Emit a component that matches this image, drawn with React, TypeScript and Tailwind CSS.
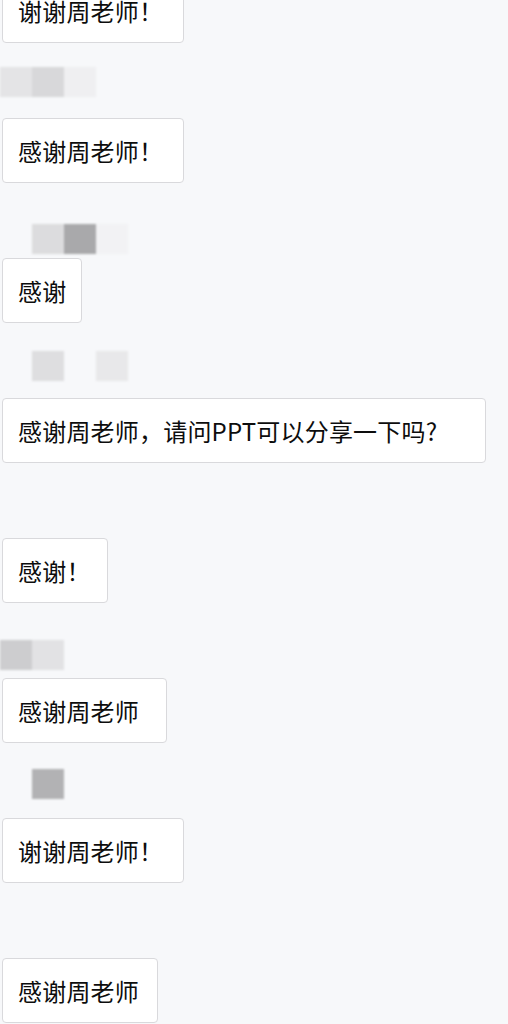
import React from 'react';

type Block = { left: string; w: string; color: string };

interface Msg {
  text: string;
  width: string;
  gapTop: string;
  blocks: Block[];
}

const messages: Msg[] = [
  { text: '谢谢周老师！', width: 'w-[182px]', gapTop: '', blocks: [] },
  {
    text: '感谢周老师！',
    width: 'w-[182px]',
    gapTop: 'pt-[24px]',
    blocks: [
      { left: 'ml-0', w: 'w-[32px]', color: 'bg-[#e4e4e6]' },
      { left: 'ml-0', w: 'w-[32px]', color: 'bg-[#d8d8da]' },
      { left: 'ml-0', w: 'w-[32px]', color: 'bg-[#efeff1]' },
    ],
  },
  {
    text: '感谢',
    width: 'w-[80px]',
    gapTop: 'pt-[41px]',
    blocks: [
      { left: 'ml-[32px]', w: 'w-[32px]', color: 'bg-[#dcdcde]' },
      { left: 'ml-0', w: 'w-[32px]', color: 'bg-[#a9a9ab]' },
      { left: 'ml-0', w: 'w-[32px]', color: 'bg-[#f2f2f4]' },
    ],
  },
  {
    text: '感谢周老师，请问PPT可以分享一下吗?',
    width: 'w-[484px]',
    gapTop: 'pt-[28px]',
    blocks: [
      { left: 'ml-[32px]', w: 'w-[32px]', color: 'bg-[#dedee0]' },
      { left: 'ml-[32px]', w: 'w-[32px]', color: 'bg-[#e8e8ea]' },
    ],
  },
  { text: '感谢！', width: 'w-[106px]', gapTop: '', blocks: [] },
  {
    text: '感谢周老师',
    width: 'w-[165px]',
    gapTop: 'pt-[37px]',
    blocks: [
      { left: 'ml-0', w: 'w-[32px]', color: 'bg-[#cdcdcf]' },
      { left: 'ml-0', w: 'w-[32px]', color: 'bg-[#e2e2e4]' },
    ],
  },
  {
    text: '谢谢周老师！',
    width: 'w-[182px]',
    gapTop: 'pt-[26px]',
    blocks: [{ left: 'ml-[32px]', w: 'w-[32px]', color: 'bg-[#b2b2b4]' }],
  },
  { text: '感谢周老师', width: 'w-[156px]', gapTop: '', blocks: [] },
];

const Bubble: React.FC<{ text: string; width: string }> = ({ text, width }) => (
  <div
    className={`${width} h-[65px] ml-[2px] flex items-center pl-[15px] bg-white border border-[#d9d9dc] rounded-[4px] text-[24px] leading-none tracking-[0.2px] text-[#0d0d0d] whitespace-nowrap`}
  >
    {text}
  </div>
);

const NameBlur: React.FC<{ gapTop: string; blocks: Block[] }> = ({ gapTop, blocks }) => (
  <div className={`h-[75px] ${gapTop}`}>
    {blocks.length > 0 && (
      <div className="flex h-[30px] blur-[1px]">
        {blocks.map((b, i) => (
          <div key={i} className={`${b.left} ${b.w} h-full ${b.color}`} />
        ))}
      </div>
    )}
  </div>
);

export default function App() {
  return (
    <div
      className="w-[508px] h-[1024px] overflow-hidden bg-[#f7f8fa]"
      style={{ fontFamily: '"Noto Sans CJK SC", "Noto Sans", sans-serif' }}
    >
      <div className="flex flex-col -mt-[22px]">
        {messages.map((m, i) => (
          <React.Fragment key={i}>
            {i > 0 && <NameBlur gapTop={m.gapTop} blocks={m.blocks} />}
            <Bubble text={m.text} width={m.width} />
          </React.Fragment>
        ))}
      </div>
    </div>
  );
}
